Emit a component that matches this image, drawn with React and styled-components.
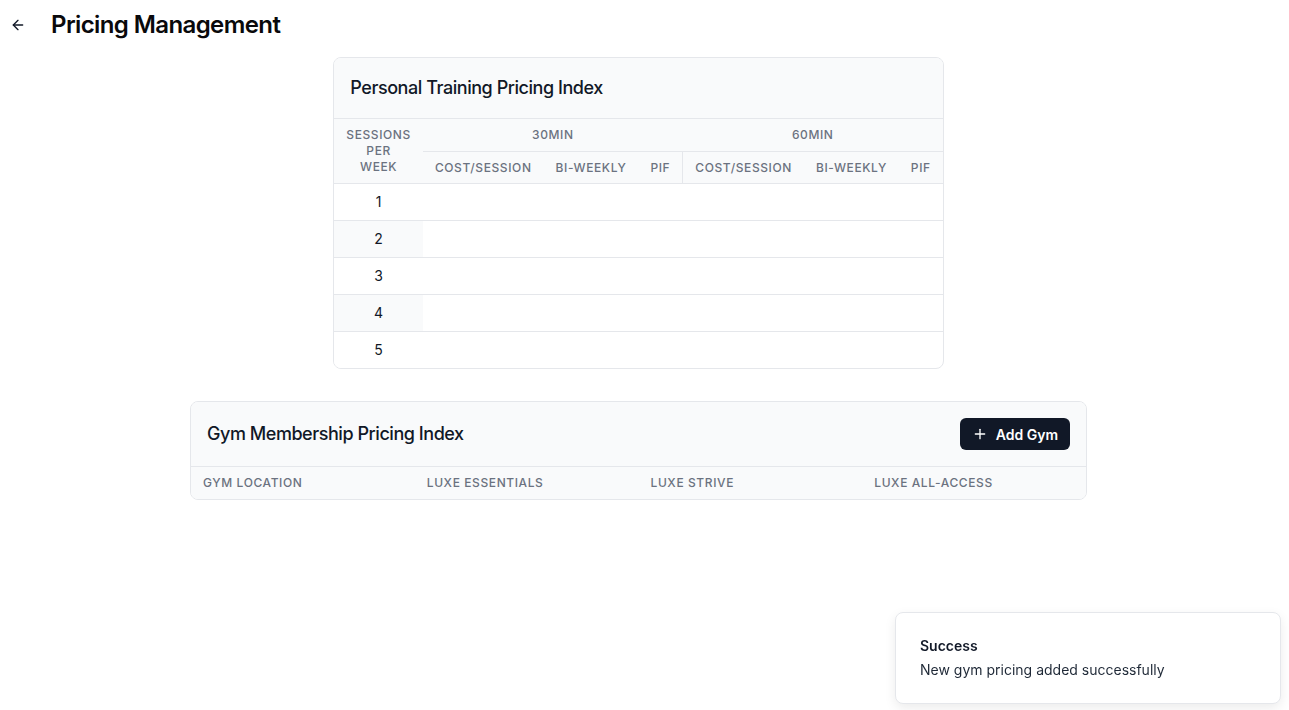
import { ArrowLeft, Plus } from "lucide-react";
import styled, { createGlobalStyle } from "styled-components";

const sessions = [1, 2, 3, 4, 5];
const subCols = ["Cost/Session", "Bi-Weekly", "PIF"];
const gymCols = ["Gym Location", "Luxe Essentials", "Luxe Strive", "Luxe All-Access"];

const App = () => {
  return (
    <>
      <GlobalStyle />
      <Page>
        <TopBar>
          <BackButton>
            <ArrowLeft size={16} strokeWidth={2} />
          </BackButton>
          <PageTitle>Pricing Management</PageTitle>
        </TopBar>

        <Content>
          <Card>
            <CardHeader>
              <CardTitle>Personal Training Pricing Index</CardTitle>
            </CardHeader>
            <Table>
              <thead>
                <tr>
                  <Th rowSpan={2}>
                    <Stack>Sessions per week</Stack>
                  </Th>
                  <Th colSpan={3}>30min</Th>
                  <Th colSpan={3}>60min</Th>
                </tr>
                <tr>
                  {subCols.map((c) => (
                    <Th key={"a" + c} $sub>
                      {c}
                    </Th>
                  ))}
                  {subCols.map((c, i) => (
                    <Th key={"b" + c} $sub $divider={i === 0}>
                      {c}
                    </Th>
                  ))}
                </tr>
              </thead>
              <tbody>
                {sessions.map((n) => (
                  <Row key={n}>
                    <SessionCell $shade={n % 2 === 0}>{n}</SessionCell>
                    {Array.from({ length: 6 }).map((_, i) => (
                      <Td key={i} />
                    ))}
                  </Row>
                ))}
              </tbody>
            </Table>
          </Card>

          <Card $width="897px">
            <CardHeader $tall>
              <CardTitle>Gym Membership Pricing Index</CardTitle>
              <AddButton>
                <Plus size={16} strokeWidth={2} />
                Add Gym
              </AddButton>
            </CardHeader>
            <GymHead>
              {gymCols.map((c) => (
                <GymTh key={c}>{c}</GymTh>
              ))}
            </GymHead>
          </Card>
        </Content>
      </Page>

      <Toast>
        <ToastTitle>Success</ToastTitle>
        <ToastText>New gym pricing added successfully</ToastText>
      </Toast>
    </>
  );
};

export default App;

const GlobalStyle = createGlobalStyle`
  * { box-sizing: border-box; }
  body {
    margin: 0;
    background: #fff;
    font-family: Inter, "Noto Sans", sans-serif;
    color: #111827;
  }
`;

const Page = styled.div`
  min-height: 710px;
  padding-right: 12px;
`;

const TopBar = styled.div`
  height: 49px;
  display: flex;
  align-items: center;
  padding-left: 10px;
  gap: 25px;
`;

const BackButton = styled.button`
  width: 16px;
  height: 16px;
  padding: 0;
  border: 0;
  background: none;
  color: #111827;
  display: flex;
  align-items: center;
  justify-content: center;
  cursor: pointer;
`;

const PageTitle = styled.h1`
  margin: 0;
  font-size: 24px;
  line-height: 32px;
  font-weight: 600;
  color: #09090b;
  letter-spacing: -0.025em;
`;

const Content = styled.div`
  display: flex;
  flex-direction: column;
  align-items: center;
  gap: 32px;
  padding-top: 8px;
`;

const Card = styled.div`
  width: ${({ $width }) => $width || "fit-content"};
  background: #fff;
  border: 1px solid #e5e7eb;
  border-radius: 8px;
  overflow: hidden;
`;

const CardHeader = styled.div`
  display: flex;
  align-items: center;
  justify-content: space-between;
  padding: 16px;
  min-height: ${({ $tall }) => ($tall ? "64px" : "61px")};
  background: #f9fafb;
  border-bottom: 1px solid #e5e7eb;
`;

const CardTitle = styled.h2`
  margin: 0;
  font-size: 18px;
  line-height: 28px;
  font-weight: 500;
  color: #111827;
  letter-spacing: -0.025em;
`;

const Table = styled.table`
  border-collapse: collapse;
  font-size: 14px;
`;

const Th = styled.th`
  padding: ${({ $sub }) => ($sub ? "8px 12px 7px" : "8px 12px")};
  background: #f9fafb;
  color: #6b7280;
  font-size: 12px;
  line-height: 16px;
  font-weight: 500;
  letter-spacing: 0.05em;
  text-transform: uppercase;
  text-align: center;
  white-space: nowrap;
  border-bottom: 1px solid #e5e7eb;
  border-left: ${({ $divider }) => ($divider ? "1px solid #e5e7eb" : "0")};
`;

const Stack = styled.div`
  width: min-content;
  margin: 0 auto;
  white-space: normal;
`;

const Row = styled.tr`
  border-bottom: 1px solid #e5e7eb;
  &:last-child {
    border-bottom: 0;
  }
`;

const SessionCell = styled.td`
  padding: 8px 12px;
  line-height: 20px;
  text-align: center;
  color: #111827;
  background: ${({ $shade }) => ($shade ? "#f9fafb" : "#fff")};
`;

const Td = styled.td`
  padding: 8px 12px;
  line-height: 20px;
`;

const AddButton = styled.button`
  height: 32px;
  display: flex;
  align-items: center;
  gap: 8px;
  padding: 0 12px;
  border: 0;
  border-radius: 6px;
  background: #111827;
  color: #fff;
  font-family: inherit;
  font-size: 14px;
  font-weight: 600;
  cursor: pointer;
`;

const GymHead = styled.div`
  display: grid;
  grid-template-columns: repeat(4, 1fr);
  background: #f9fafb;
`;

const GymTh = styled.div`
  padding: 8px 12px;
  color: #6b7280;
  font-size: 12px;
  line-height: 16px;
  font-weight: 500;
  letter-spacing: 0.05em;
  text-transform: uppercase;
`;

const Toast = styled.div`
  position: fixed;
  right: 8px;
  bottom: 6px;
  width: 386px;
  padding: 23px 24px;
  background: #fff;
  border: 1px solid #e5e7eb;
  border-radius: 8px;
  box-shadow: 0 4px 12px rgba(0, 0, 0, 0.08);
  display: flex;
  flex-direction: column;
  gap: 4px;
`;

const ToastTitle = styled.div`
  font-size: 14px;
  line-height: 20px;
  font-weight: 600;
  color: #111827;
`;

const ToastText = styled.div`
  font-size: 14px;
  line-height: 20px;
  color: #1f2937;
`;
